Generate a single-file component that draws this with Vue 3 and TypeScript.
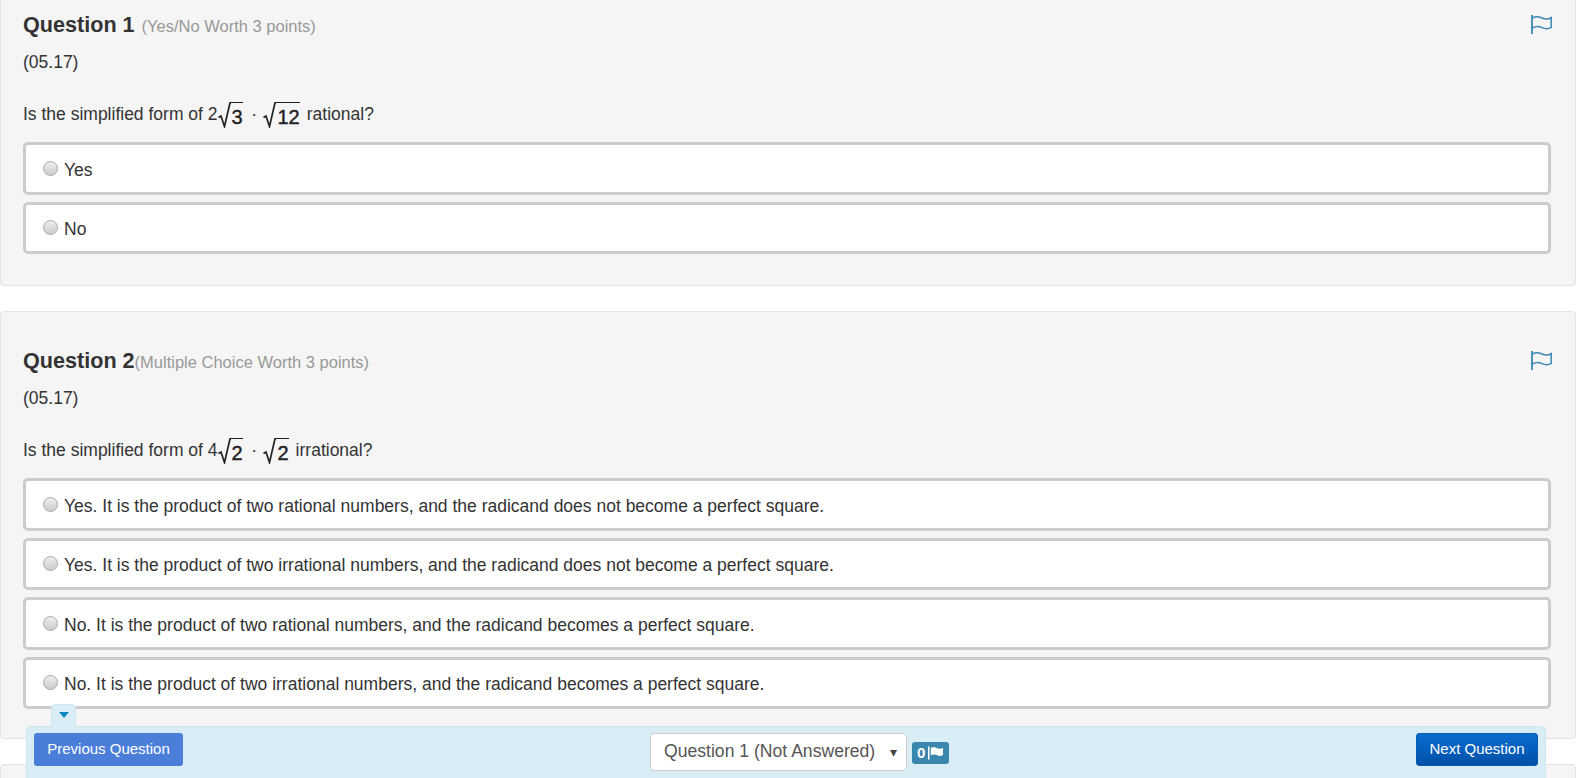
<script setup lang="ts">
interface Radical { coef?: string; value: string }
interface Question {
  title: string
  meta: string
  metaSpaced: boolean
  before: string
  first: Radical
  second: Radical
  after: string
  options: string[]
}
const questions: Question[] = [
  {
    title: 'Question 1',
    meta: '(Yes/No Worth 3 points)',
    metaSpaced: true,
    before: 'Is the simplified form of ',
    first: { coef: '2', value: '3' },
    second: { value: '12' },
    after: 'rational?',
    options: ['Yes', 'No'],
  },
  {
    title: 'Question 2',
    meta: '(Multiple Choice Worth 3 points)',
    metaSpaced: false,
    before: 'Is the simplified form of ',
    first: { coef: '4', value: '2' },
    second: { value: '2' },
    after: 'irrational?',
    options: [
      'Yes. It is the product of two rational numbers, and the radicand does not become a perfect square.',
      'Yes. It is the product of two irrational numbers, and the radicand does not become a perfect square.',
      'No. It is the product of two rational numbers, and the radicand becomes a perfect square.',
      'No. It is the product of two irrational numbers, and the radicand becomes a perfect square.',
    ],
  },
]
</script>

<template>
  <div class="page">
    <section v-for="(q, i) in questions" :key="q.title" class="card" :class="{ second: i === 1 }">
      <div class="head">
        <h2 class="title">{{ q.title }}<span class="meta" :class="{ spaced: q.metaSpaced }">{{ q.meta }}</span></h2>
        <svg class="flag" width="21" height="19" viewBox="0 0 21 19" fill="none" stroke="#3a87b5">
          <path d="M1 0V19" stroke-width="1.8" />
          <path d="M1.5 3C5 0.8 8 1.6 11 3C14 4.4 17 4.6 20.2 2.6V12.4C17 14.2 14 14 11 12.6C8 11.2 5 11 1.5 13" stroke-width="1.5" />
        </svg>
      </div>
      <p class="code">(05.17)</p>
      <p class="prompt">
        <span>{{ q.before }}</span>
        <span class="math"><span class="coef">{{ q.first.coef }}</span><svg class="surd" width="13" height="26" viewBox="0 0 13 26" fill="none" stroke="#222"><path d="M0.5 15.5L3 14L6.5 24.5L12 0.8H13" stroke-width="1.7" /></svg><span class="rad">{{ q.first.value }}</span></span>
        <span class="dot">·</span>
        <span class="math"><svg class="surd" width="13" height="26" viewBox="0 0 13 26" fill="none" stroke="#222"><path d="M0.5 15.5L3 14L6.5 24.5L12 0.8H13" stroke-width="1.7" /></svg><span class="rad">{{ q.second.value }}</span></span>
        <span class="after">{{ q.after }}</span>
      </p>
      <label v-for="o in q.options" :key="o" class="option">
        <span class="radio"></span>
        <span class="opt-text">{{ o }}</span>
      </label>
    </section>
    <section class="card third"></section>

    <div class="bar">
      <div class="tab"><span class="caret"></span></div>
      <button class="btn prev">Previous Question</button>
      <div class="center">
        <div class="select">
          <span>Question 1 (Not Answered)</span>
          <span class="sel-caret">▾</span>
        </div>
        <span class="badge">0
          <svg width="15" height="14" viewBox="0 0 16 14" fill="#fff">
            <rect x="0" y="0" width="1.6" height="14" />
            <path d="M3 1.5C6 0 8 1 10 2C12 3 14 2.6 16 1.5V9C14 10.2 12 10.5 10 9.5C8 8.5 6 8 3 9.5Z" />
          </svg>
        </span>
      </div>
      <button class="btn next">Next Question</button>
    </div>
  </div>
</template>

<style>
html, body { margin: 0; background: #fff; overflow: hidden; }
</style>

<style scoped>
.page {
  position: relative;
  height: 778px;
  overflow: hidden;
  font-family: "Liberation Sans", Arial, sans-serif;
  font-size: 17.5px;
  color: #333;
  background: #fff;
}
.card {
  box-sizing: border-box;
  width: 1576px;
  background: #f5f5f5;
  border: 1px solid #e3e3e3;
  border-radius: 4px;
  padding: 0 24px 0 22px;
  margin-bottom: 25px;
}
.card:first-child {
  margin-top: -20px;
  padding-top: 30px;
  height: 306px;
}
.second {
  padding-top: 35px;
  height: 428px;
}
.third { height: 60px; }
.head {
  display: flex;
  justify-content: space-between;
  align-items: flex-start;
  height: 27px;
}
.title {
  margin: 0;
  font-size: 21.6px;
  line-height: 27px;
  font-weight: 700;
  color: #333;
}
.meta {
  font-size: 16.5px;
  font-weight: 400;
  color: #999;
}
.meta.spaced { margin-left: 7px; }
.flag { margin: 4px -1px 0 0; }
.code { margin: 12px 0 0; line-height: 24px; height: 24px; font-size: 17.5px; }
.prompt {
  display: flex;
  align-items: center;
  height: 30px;
  margin: 25px 0 0;
  font-size: 17.5px;
  white-space: pre;
}
.math { display: inline-flex; align-items: flex-start; height: 30px; }
.coef { margin-top: 3px; line-height: 24px; }
.surd { margin-top: 3px; }
.rad {
  border-top: 1.6px solid #222;
  margin-top: 3px;
  font-size: 20px;
  line-height: 29px;
  height: 25px;
  padding: 0 0.5px 0 1px;
  color: #222;
  -webkit-text-stroke: 0.4px #222;
}
.dot { margin: 0 6.5px 0 8px; }
.after { margin-left: 6.5px; }
.option {
  box-sizing: border-box;
  display: flex;
  align-items: center;
  height: 52.5px;
  margin-top: 7px;
  padding: 3px 0 0 17px;
  background: #fff;
  border: 3px solid #ccc;
  border-radius: 5px;
  font-size: 17.5px;
}
.prompt + .option { margin-top: 13px; }
.opt-text { padding-top: 1px; }
.radio {
  box-sizing: border-box;
  width: 15px;
  height: 15px;
  margin: -3px 6px 0 0;
  border: 1px solid #aaa;
  border-radius: 50%;
  background: linear-gradient(#eee, #ccc);
}
.bar {
  position: absolute;
  left: 26px;
  top: 726px;
  width: 1520px;
  height: 52px;
  box-sizing: border-box;
  display: flex;
  align-items: flex-start;
  justify-content: space-between;
  padding: 6px 7px 0 7px;
  background: #d9edf7;
  border: 1px solid #cde6f2;
  border-bottom: 0;
  border-radius: 5px 5px 0 0;
}
.tab {
  position: absolute;
  left: 24px;
  top: -23px;
  width: 25px;
  height: 23px;
  background: #d9edf7;
  border: 1px solid #cde6f2;
  border-bottom: 0;
  border-radius: 5px 5px 0 0;
  display: flex;
  justify-content: center;
  padding-top: 7px;
  box-sizing: border-box;
}
.caret {
  width: 0;
  height: 0;
  border-left: 5.5px solid transparent;
  border-right: 5.5px solid transparent;
  border-top: 6px solid #0a86c5;
}
.btn {
  height: 33px;
  border: 1px solid transparent;
  border-radius: 3px;
  font-family: inherit;
  font-size: 15px;
  color: #fff;
  padding: 0 0 2px;
}
.prev { width: 149px; background: #4b7ed8; }
.next {
  width: 122px;
  background: linear-gradient(#0a6cd0, #0050a8);
  border-color: #0a5cb0;
}
.center {
  position: absolute;
  left: 623px;
  top: 6px;
  display: flex;
  align-items: center;
  gap: 5px;
}
.select {
  box-sizing: border-box;
  width: 257px;
  height: 38px;
  display: flex;
  align-items: center;
  justify-content: space-between;
  padding: 0 9px 2px 13px;
  background: #fff;
  border: 1px solid #ccc;
  border-radius: 4px;
  font-size: 17.6px;
  color: #555;
}
.sel-caret { font-size: 14px; color: #444; padding-top: 2px; }
.badge {
  box-sizing: border-box;
  width: 37px;
  height: 22px;
  margin-top: 2px;
  padding: 0 0 1px 5px;
  display: flex;
  align-items: center;
  gap: 3px;
  background: #3a87ad;
  border-radius: 3px;
  color: #fff;
  font-size: 15px;
  font-weight: 700;
}
</style>
